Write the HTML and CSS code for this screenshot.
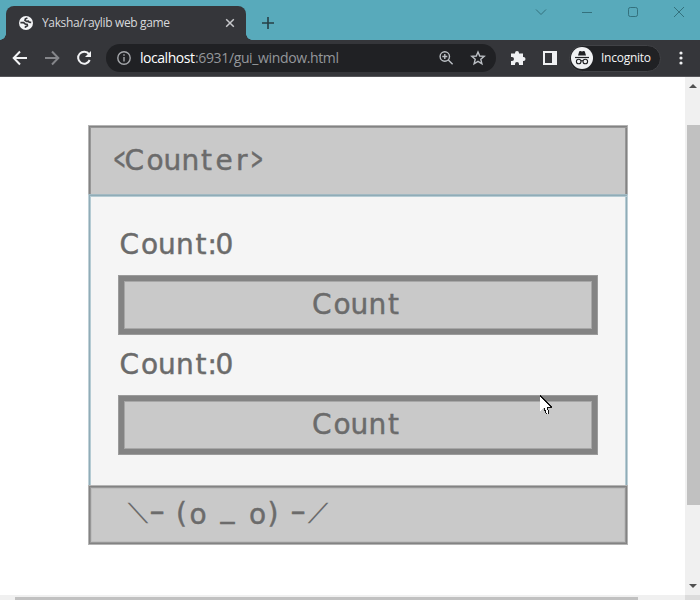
FILE: index.html
```html
<!DOCTYPE html>
<html lang="en">
<head>
<meta charset="utf-8">
<title>Yaksha/raylib web game</title>
<link rel="stylesheet" href="styles.css">
</head>
<body>
<div class="browser">
  <header class="tabs">
    <div class="tab">
      <svg class="globe" width="14" height="14" viewBox="0 0 14 14"><circle cx="7" cy="7" r="7" fill="#f4f5f7"/><path d="M1.4 6.6H4.6L6.2 8 8.2 8.4 8.4 9.8 6.6 10.6 6.4 11.8M8.4 2 6.4 2.8 6 4.4 7.6 5.4 9.4 5.2 10.2 6.2 12.2 6.4" fill="none" stroke="#35363a" stroke-width="1.7"/></svg>
      <svg class="tab-title" width="130" height="20"><text x="0" y="14" textLength="128">Yaksha/raylib web game</text></svg>
      <svg class="tab-close" width="10" height="10" viewBox="0 0 10 10"><path d="M1.2 1.2 8.8 8.8M8.8 1.2 1.2 8.8" stroke="#c8c9cc" stroke-width="1.5"/></svg>
    </div>
    <svg class="plus" width="12" height="12" viewBox="0 0 12 12"><path d="M6 0V12M0 6H12" stroke="#263f46" stroke-width="1.6"/></svg>
    <svg class="controls" width="160" height="24" viewBox="530 0 160 24" fill="none" stroke="#34717d" stroke-width="1"><path d="M536 9.5 541 14.5 546 9.5M582 12.5H592M674 7 684 17M684 7 674 17"/><rect x="628.5" y="7.5" width="9" height="9" rx="1.8"/></svg>
  </header>
  <nav class="toolbar">
    <svg class="nav-icons" width="94" height="36" viewBox="0 40 94 36" fill="none" stroke-width="2">
      <path d="M27 58H14M20 51.5 13.7 58 20 64.5" stroke="#f2f3f5"/>
      <path d="M45 58H58M52 51.5 58.3 58 52 64.5" stroke="#85868a"/>
      <path d="M89 54.2A6 6 0 1 0 89.7 60" stroke="#f2f3f5"/><path d="M91 51V57H85Z" fill="#f2f3f5"/>
    </svg>
    <div class="address">
      <svg width="14" height="14" viewBox="0 0 14 14" fill="none" stroke="#a5a7ab" stroke-width="1.4"><circle cx="7" cy="7" r="6.2"/><path d="M7 6V10.5M7 3.2V4.8"/></svg>
      <svg class="url" width="204" height="24"><text class="host" x="0" y="17" textLength="55">localhost</text><text x="55" y="17" textLength="144">:6931/gui_window.html</text></svg>
      <svg class="address-icons" width="50" height="18" viewBox="438 49 50 18" fill="none" stroke="#bcc0c5" stroke-width="1.4"><circle cx="444.8" cy="56.5" r="4.7"/><path d="M448.3 60 452.6 64.2M444.8 54V59M442.3 56.5H447.3"/><path d="M478 52 479.7 56 484.2 56.4 480.8 59.3 481.9 63.8 478 61.4 474.1 63.8 475.2 59.3 471.8 56.4 476.3 56Z"/></svg>
    </div>
    <svg class="extensions" width="48" height="18" viewBox="510 49 48 18"><path d="M511 53.5H515V53A2 2 0 0 1 519 53V53.5H523V57H523.5A2 2 0 0 1 523.5 61H523V65H519V64A2 2 0 0 0 515 64V65H511V61H512A2 2 0 0 0 512 57H511Z" fill="#f0f1f3"/><path d="M543 51H557V65H543ZM545 53V63H552V53Z" fill="#f0f1f3" fill-rule="evenodd"/></svg>
    <div class="incognito">
      <svg width="22" height="22" viewBox="0 0 22 22"><circle cx="11" cy="11" r="11" fill="#f0f1f3"/><path d="M7 8.5 8.2 4.4Q8.5 3.8 9.3 4L11 4.5 12.7 4Q13.5 3.8 13.8 4.4L15 8.5Z" fill="#202124"/><path d="M4 10.5H18" stroke="#202124" stroke-width="1.2"/><g fill="none" stroke="#202124" stroke-width="1.1"><circle cx="7.7" cy="14.5" r="2.3"/><circle cx="14.3" cy="14.5" r="2.3"/><path d="M10 14Q11 13.3 12 14"/></g></svg>
      <svg class="profile" width="52" height="20"><text x="0" y="14" textLength="50">Incognito</text></svg>
    </div>
    <svg class="more" width="4" height="14" viewBox="0 0 4 14" fill="#f0f1f3"><circle cx="2" cy="2" r="1.6"/><circle cx="2" cy="7" r="1.6"/><circle cx="2" cy="12" r="1.6"/></svg>
  </nav>
  <div class="viewport">
    <main class="page">
      <section class="window">
        <div class="bar title"><svg class="label" width="160" height="36" viewBox="110 142 160 36"><text transform="translate(112.9 169.3) scale(.55 1.1)">&lt;</text><text x="124.5 146.5 163.5 181.5 201 215.5 236" y="170">Counter</text><text transform="translate(250.4 169.3) scale(.55 1.1)">&gt;</text></svg></div>
        <div class="content">
          <svg class="label" width="120" height="60" viewBox="118 215 120 60"><text x="119.5 141 158 176 195.5 207.5 215.5" y="254">Count:0</text></svg>
          <button class="action"><svg class="label" width="94" height="36" viewBox="310 286 94 36"><text x="311 332.5 349.5 367.5 387" y="313">Count</text></svg></button>
          <svg class="label" width="120" height="60" viewBox="118 335 120 60"><text x="119.5 141 158 176 195.5 207.5 215.5" y="374">Count:0</text></svg>
          <button class="action"><svg class="label" width="94" height="36" viewBox="310 406 94 36"><text x="311 332.5 349.5 367.5 387" y="433">Count</text></svg></button>
        </div>
        <div class="bar status"><svg class="label" width="210" height="40" viewBox="122 495 210 40"><text class="slash" transform="translate(127 521) skewX(31)" x="11.5" y="0">\</text><text transform="translate(149 521) scale(1.6 1)">-</text><text x="176 189.5 220.5 249 267.5" y="523 524 517 524 523">(o_o)</text><text transform="translate(290 521) scale(1.6 1)">-</text><text class="slash" transform="translate(307 521) skewX(-31)" x="2" y="0">/</text></svg></div>
      </section>
      <svg class="pointer" width="12" height="20" viewBox="0 0 12 20" shape-rendering="crispEdges"><path d="M0 0V16.5L4 13 6.5 19H9L6.5 12H11.5Z" fill="#fff"/><path d="M0 .5 11.5 12H7L9 18.5M4 13 6.5 19" fill="none" stroke="#111" stroke-width="1"/></svg>
    </main>
    <aside class="vscroll"><svg width="8" height="4"><path d="M0 4 4 0 8 4Z" fill="#505050"/></svg><div class="vthumb"></div><svg class="down" width="8" height="4"><path d="M0 0H8L4 4Z" fill="#505050"/></svg></aside>
  </div>
  <footer class="hscroll"><div class="hthumb"></div><div class="corner"></div></footer>
</div>
</body>
</html>
```
FILE: styles.css
```css
* { box-sizing: border-box; }
body { margin: 0; overflow: hidden; }
svg { display: block; flex: none; }
.browser { width: 700px; height: 600px; display: flex; flex-direction: column; background: #fff; font-family: "Open Sans", "Noto Sans", sans-serif; }
.tabs { height: 40px; flex: none; display: flex; align-items: flex-start; background: #58aabb; }
.tab { position: relative; width: 240px; height: 34px; margin: 6px 0 0 6px; padding-left: 13px; display: flex; align-items: center; background: #35363a; border-radius: 8px 8px 0 0; }
.tab::before, .tab::after { content: ""; position: absolute; bottom: 0; width: 6px; height: 6px; }
.tab::before { left: -6px; background: radial-gradient(circle at 0 0, #58aabb 5.5px, #35363a 6px); }
.tab::after { right: -6px; background: radial-gradient(circle at 100% 0, #58aabb 5.5px, #35363a 6px); }
.tab-title { margin-left: 9px; font-size: 12px; fill: #d8d9dc; }
.tab-close { margin-left: 53px; }
.plus { margin: 17px 0 0 16px; }
.controls { margin-left: auto; margin-right: 10px; }
.toolbar { height: 37px; flex: none; display: flex; align-items: center; background: #35363a; border-bottom: 1px solid #56565a; }
.address { width: 390px; height: 28px; margin-left: 12px; padding: 0 8px 0 11px; display: flex; align-items: center; border-radius: 14px; background: #202124; }
.url { margin-left: 9px; font-size: 14px; fill: #94979b; }
.url .host { fill: #fff; }
.address-icons { margin-left: auto; }
.extensions { margin-left: 14px; }
.incognito { width: 92px; height: 27px; margin-left: 11px; padding-left: 1px; border: 1px solid #414246; border-radius: 14px; background: #202124; display: flex; align-items: center; }
.profile { margin-left: 8px; font-size: 12px; fill: #f4f4f5; }
.more { margin-left: 18px; }
.viewport { height: 518px; flex: none; display: flex; }
.page { position: relative; width: 685px; padding: 48px 0 0 88px; }
.window { width: 540px; height: 420px; display: flex; flex-direction: column; background: #f5f5f5; }
.bar { flex: none; display: flex; align-items: center; border: 1px solid #b4b4b4; background: #c9c9c9; box-shadow: inset 0 0 0 1px #838383, inset 0 0 0 2px #979797, inset 0 0 0 3px #bebebe; }
.title { height: 69px; padding-left: 21px; border-bottom: 0; box-shadow: inset 1px 1px #838383, inset 2px 2px #979797, inset -1px 0 #838383, inset -2px 0 #979797; }
.content { height: 291px; flex: none; padding: 20px 27px 0; border: 1px solid #c0d1d8; border-width: 1px 1px 0; border-top-color: #a2b9c2; box-shadow: inset 1px 1px #90acb7, inset 2px 2px #b5cbd3, inset -1px 0 #90acb7, inset -2px 0 #b5cbd3; }
.content > .label { margin-left: 2px; }
.action { width: 480px; height: 60px; margin: 0 0 0 2px; padding: 0; display: flex; align-items: center; justify-content: center; background: #c9c9c9; border: 1px solid #9b9b9b; box-shadow: inset 0 0 0 5px #838383, inset 0 0 0 6px #a7a7a7; border-radius: 0; }
.status { height: 60px; padding-left: 33px; }
.label { overflow: visible; font-family: "DejaVu Sans", sans-serif; font-size: 28px; fill: #6b6b6b; stroke: #6b6b6b; stroke-width: .45px; }
.label .slash { font-size: 25px; stroke: none; }
.pointer { position: absolute; left: 540px; top: 318px; }
.vscroll { width: 15px; padding-top: 7px; display: flex; flex-direction: column; align-items: center; background: #f0f0f0; }
.vthumb { width: 13px; height: 380px; margin-top: 37px; align-self: flex-end; background: #c1c1c1; }
.down { margin-top: 79px; }
.hscroll { height: 5px; flex: none; padding: 2px 0 0 15px; display: flex; background: #f0f0f0; }
.hthumb { width: 623px; background: #c1c1c1; }
.corner { width: 15px; height: 5px; margin: -2px 0 0 auto; background: #dcdcdc; }
```
